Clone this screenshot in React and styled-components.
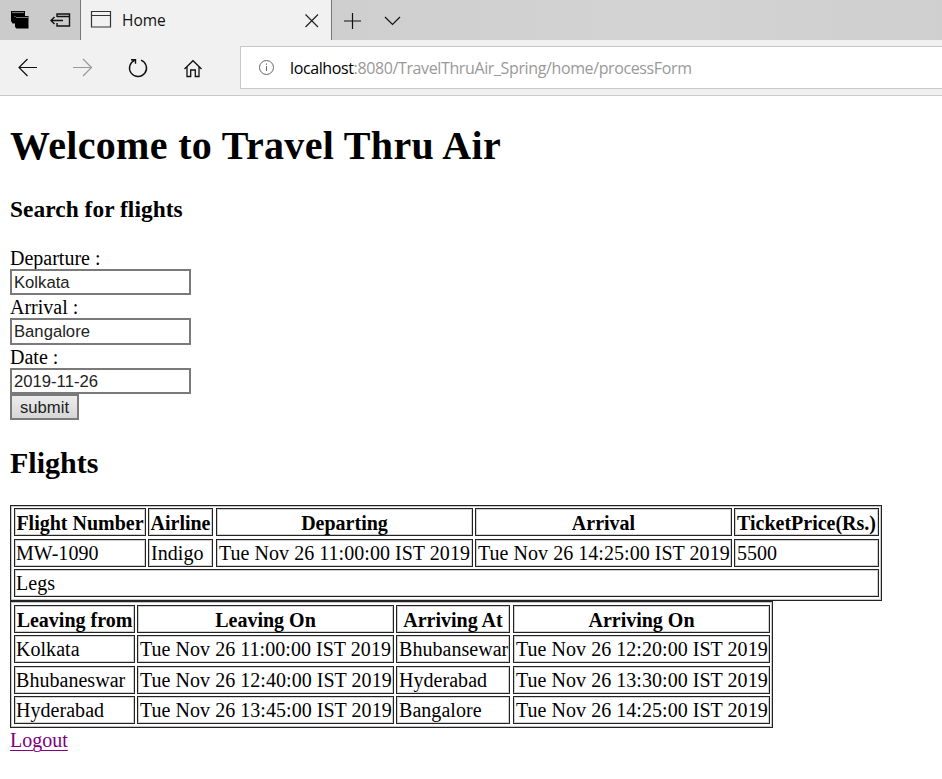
import React from "react";
import styled, { createGlobalStyle } from "styled-components";

const Global = createGlobalStyle`
  * { box-sizing: border-box; }
  body { margin: 0; background: #fff; color: #000; font-family: "Liberation Serif", "Times New Roman", serif; overflow: hidden; }
`;
const Page = styled.div`width: 942px; height: 779px; overflow: hidden;`;
const TabBar = styled.header`
  display: flex; height: 40px; background: linear-gradient(90deg, #cacaca, #d3d3d3 70%, #cfcfcf);
`;
const TabTools = styled.div`
  display: flex; width: 81px; border-right: 1px solid #777; background: #cbcbcb;
`;
const Tab = styled.div`
  display: flex; width: 251px; background: #f1f1f1; border-right: 1px solid #777;
`;
const TabTitle = styled.span`
  width: 170px; padding-left: 1px; font: 15.5px/41px "Open Sans", sans-serif; color: #111;
`;
const Icon = styled.svg`
  display: block; flex: none; fill: none; stroke: ${(p) => p.$color || "#111"}; stroke-width: ${(p) => p.$weight || 1.2};
`;
const NavBar = styled.nav`
  display: flex; height: 56px; background: #f1f1f1; border-bottom: 1px solid #cacaca;
`;
const Address = styled.div`
  display: flex; flex: 1; height: 43px; margin-top: 6px; background: #fff; border: 1px solid #c8c8c8; border-right: 0;
`;
const Url = styled.span`
  font: 16px/43px "Open Sans", sans-serif; color: #999; white-space: nowrap; letter-spacing: -0.38px;
`;
const Host = styled.span`color: #000;`;
const Content = styled.main`padding: 27px 10px 0; font-size: 20px;`;
const Title = styled.h1`
  margin: 0; font-size: 40px; line-height: 46px; height: 71px; white-space: nowrap; letter-spacing: 0.34px;
`;
const SubTitle = styled.h3`
  margin: 0; font-size: 23.4px; line-height: 30px; height: 52px; letter-spacing: 0.04px;
`;
const Section = styled.h2`margin: 0; font-size: 30px; line-height: 32px; height: 58px;`;
const Form = styled.form`display: flex; flex-direction: column; height: 201px;`;
const Label = styled.label`display: block; height: 23px; line-height: 25px;`;
const Field = styled.input`
  display: block; width: 181px; height: ${(p) => p.$h || 26}px; margin: 0; border: 2px solid #7a7a7a; border-radius: 0;
  padding: ${(p) => (p.$h ? 0 : 1)}px 2px 0;
  background: #fff; color: #222; font: 16.67px "Liberation Sans", Arial, sans-serif;
`;
const Submit = styled.button`
  width: 69px; height: 26px; padding: 2px 0 0; border: 2px solid #7a7a7a; border-radius: 0; color: #222;
  background: linear-gradient(#ececec, #d6d6d6); font: 16.67px "Liberation Sans", Arial, sans-serif;
`;
const Grid = styled.div`
  display: grid; width: ${(p) => p.$w}px; height: ${(p) => p.$h}px; padding: ${(p) => p.$top}px 0 0 3px;
  grid-template-columns: ${(p) => p.$cols}; grid-template-rows: ${(p) => p.$rows};
  border: 1px solid #222; box-shadow: inset 0 0 0 1px #c8c8c8;
`;
const Cell = styled.div`
  height: 28px; margin-right: ${(p) => p.$gap}px; border: 1px solid #222;
  padding: 0 1px 0 ${(p) => (p.$first || p.$head ? 1 : 2)}px;
  box-shadow: inset 0 0 0 1px #d0d0d0; line-height: ${(p) => (p.$low ? 29 : 27)}px; white-space: nowrap;
  font-weight: ${(p) => (p.$head ? 700 : 400)}; text-align: ${(p) => (p.$head ? "center" : "left")};
  grid-column: ${(p) => (p.$span ? "1 / -1" : "auto")};
  letter-spacing: ${(p) => (p.$head ? 0 : 0.04)}px;
`;
const Logout = styled.a`
  display: inline-block; line-height: 24px; color: #800080;
  text-decoration: underline; text-decoration-thickness: 1px; text-underline-offset: 3px;
`;

const flightRows = [
  ["Flight Number", "Airline", "Departing", "Arrival", "TicketPrice(Rs.)"],
  ["MW-1090", "Indigo", "Tue Nov 26 11:00:00 IST 2019", "Tue Nov 26 14:25:00 IST 2019", "5500"],
];
const legRows = [
  ["Leaving from", "Leaving On", "Arriving At", "Arriving On"],
  ["Kolkata", "Tue Nov 26 11:00:00 IST 2019", "Bhubansewar", "Tue Nov 26 12:20:00 IST 2019"],
  ["Bhubaneswar", "Tue Nov 26 12:40:00 IST 2019", "Hyderabad", "Tue Nov 26 13:30:00 IST 2019"],
  ["Hyderabad", "Tue Nov 26 13:45:00 IST 2019", "Bangalore", "Tue Nov 26 14:25:00 IST 2019"],
];
const flightGaps = [2, 3, 2, 2, 0];
const legGaps = [2, 2, 3, 0];

function Cells({ rows, gaps, low }) {
  return rows.map((row, r) =>
    row.map((text, c) => (
      <Cell key={`${r}-${c}`} $head={r === 0} $first={c === 0} $low={low || r === 0} $gap={gaps[c]}>{text}</Cell>
    ))
  );
}

export default function App() {
  return (
    <Page>
      <Global />
      <TabBar>
        <TabTools>
          <Icon width="40" height="40" viewBox="0 0 40 40">
            <path d="M11 11h14v12.500H12.500L11 21z" fill="#000" stroke="none" />
            <path d="M12 12.500h12" stroke="#777" />
            <path d="M15 16h13.500v12.500H16.500L15 27z" fill="#000" stroke="none" />
            <path d="M16 17.500h12M15 17v-1" stroke="#777" />
          </Icon>
          <Icon width="40" height="40" viewBox="40 0 40 40" $weight="1.4">
            <path d="M57 17v-3h12.500v12H57v-3M57 16.500h12M51 20.500h12M54.500 17l-3.500 3.500 3.500 3.500" />
          </Icon>
        </TabTools>
        <Tab>
          <Icon width="40" height="40" viewBox="81 0 40 40" $color="#333">
            <path d="M91.500 11.500h19v15.500h-19zM91.500 15.500h19" />
          </Icon>
          <TabTitle>Home</TabTitle>
          <Icon width="40" height="40" viewBox="291 0 40 40" $color="#222">
            <path d="M305.500 14.500l12.500 12.500M318 14.500L305.500 27" />
          </Icon>
        </Tab>
        <Icon width="40" height="40" viewBox="332 0 40 40">
          <path d="M344 21h17M352.500 13v16" />
        </Icon>
        <Icon width="40" height="40" viewBox="372 0 40 40">
          <path d="M385 17l7.500 7.500 7.500-7.500" />
        </Icon>
      </TabBar>
      <NavBar>
        <Icon width="55" height="55" viewBox="0 40 55 55" $weight="1.2">
          <path d="M37 67.500H19M27.500 59l-8.500 8.500 8.500 8.500" />
        </Icon>
        <Icon width="55" height="55" viewBox="55 40 55 55" $color="#999">
          <path d="M73 67.500h18.500M83 59l8.500 8.500-8.500 8.500" />
        </Icon>
        <Icon width="55" height="55" viewBox="110 40 55 55" $weight="1.4">
          <path d="M141 60.100a8.500 8.500 0 1 1-6.500.2M131 59.700h4.500v4" />
        </Icon>
        <Icon width="75" height="55" viewBox="165 40 75 55" $weight="1.3">
          <path d="M184.500 69l8.500-8.300 8.500 8.300M187 67v9.500h3.700v-6.500h4.600v6.500h3.700V67" />
        </Icon>
        <Address>
          <Icon width="49" height="41" viewBox="241 47 49 41" $color="#666" $weight="1">
            <circle cx="266.500" cy="67.500" r="7" />
            <path d="M266.500 66v5M266.500 63.500v1.300" />
          </Icon>
          <Url><Host>localhost</Host>:8080/TravelThruAir_Spring/home/processForm</Url>
        </Address>
      </NavBar>
      <Content>
        <Title>Welcome to Travel Thru Air</Title>
        <SubTitle>Search for flights</SubTitle>
        <Form>
          <Label>Departure :</Label>
          <Field defaultValue="Kolkata" />
          <Label>Arrival :</Label>
          <Field $h={27} defaultValue="Bangalore" />
          <Label>Date :</Label>
          <Field defaultValue="2019-11-26" />
          <Submit type="button">submit</Submit>
        </Form>
        <Section>Flights</Section>
        <Grid $w={872} $h={96} $top={2} $cols="134px 68px 259px 259px 145px" $rows="31px 30px 28px">
          <Cells rows={flightRows} gaps={flightGaps} />
          <Cell $span $first $gap={0}>Legs</Cell>
        </Grid>
        <Grid $w={763} $h={127} $top={3} $cols="123px 259px 117px 257px" $rows="30px 31px 30px 28px">
          <Cells rows={legRows} gaps={legGaps} />
        </Grid>
        <Logout href="#">Logout</Logout>
      </Content>
    </Page>
  );
}
